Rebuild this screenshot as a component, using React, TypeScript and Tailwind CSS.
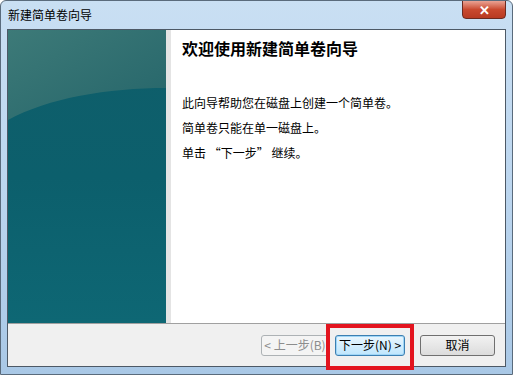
import React from "react";

const font = { fontFamily: '"Noto Sans CJK SC", "Liberation Sans", sans-serif' };

const App = () => {
  return (
    <div
      className="w-[513px] h-[375px] relative overflow-hidden flex flex-col bg-gradient-to-b from-[#c9dff3] via-[#bcd6ef] to-[#a9c8e6] rounded-t-[6px] border border-[#5a6b7c]"
      style={font}
    >
      {/* title bar */}
      <div className="h-[28px] shrink-0 flex items-center pl-[7px] relative">
        <span className="text-[12px] text-black">新建简单卷向导</span>
        <div className="absolute right-[6px] top-[-1px] w-[44px] h-[19px] rounded-b-[4px] border border-[#6b2a20] bg-gradient-to-b from-[#e9a294] via-[#c9492f] to-[#b83a22] flex items-center justify-center">
          <span className="text-white text-[13px] font-bold leading-none">✕</span>
        </div>
      </div>

      {/* client */}
      <div className="flex-1 mx-[6px] mb-[7px] border border-[#4d5966] flex flex-col bg-[#f0f0f0]">
        <div className="flex-1 flex">
          <div className="w-[158px] relative overflow-hidden bg-gradient-to-b from-[#0f5e6a] via-[#0c5f6c] to-[#0e6774]">
            <svg className="absolute inset-0" width="158" height="300" viewBox="0 0 158 300">
              <defs>
                <linearGradient id="top" x1="0" y1="0" x2="1" y2="1">
                  <stop offset="0" stopColor="#3d7a78" />
                  <stop offset="1" stopColor="#25656a" />
                </linearGradient>
              </defs>
              <path d="M0 0 H158 V58 C100 58 40 68 0 90 Z" fill="url(#top)" />
            </svg>
          </div>
          <div className="flex-1 bg-white border-l-[5px] border-[#e4e4e4] pl-[11px] pt-[8px]">
            <div className="text-[16px] font-bold text-black leading-[20px]">欢迎使用新建简单卷向导</div>
            <div className="mt-[37px] text-[12px] text-black leading-[16px] flex flex-col gap-[9px]">
              <span>此向导帮助您在磁盘上创建一个简单卷。</span>
              <span>简单卷只能在单一磁盘上。</span>
              <span>单击 “下一步” 继续。</span>
            </div>
          </div>
        </div>
        <div className="h-[43px] border-t border-[#a0a0a0] flex items-center justify-end pr-[10px] gap-[6px] text-[12px]">
          <div className="w-[68px] h-[21px] border border-[#adb2b5] rounded-[3px] bg-[#f4f4f4] text-[#8d8d8d] flex items-center justify-center">
            &lt; 上一步(B)
          </div>
          <div className="relative">
            <div className="w-[70px] h-[21px] border border-[#3c7fb1] rounded-[3px] bg-gradient-to-b from-[#eaf6fd] to-[#bee6fd] text-black flex items-center justify-center shadow-[inset_0_0_0_1px_#9fd6f7]">
              下一步(N) &gt;
            </div>
            <div className="absolute -left-[9px] -top-[11px] w-[88px] h-[46px] border-[4px] border-[#e3141f]" />
          </div>
          <div className="ml-[9px] w-[75px] h-[21px] border border-[#707070] rounded-[3px] bg-gradient-to-b from-[#f2f2f2] to-[#dcdcdc] text-black flex items-center justify-center">
            取消
          </div>
        </div>
      </div>
    </div>
  );
};

export default App;
